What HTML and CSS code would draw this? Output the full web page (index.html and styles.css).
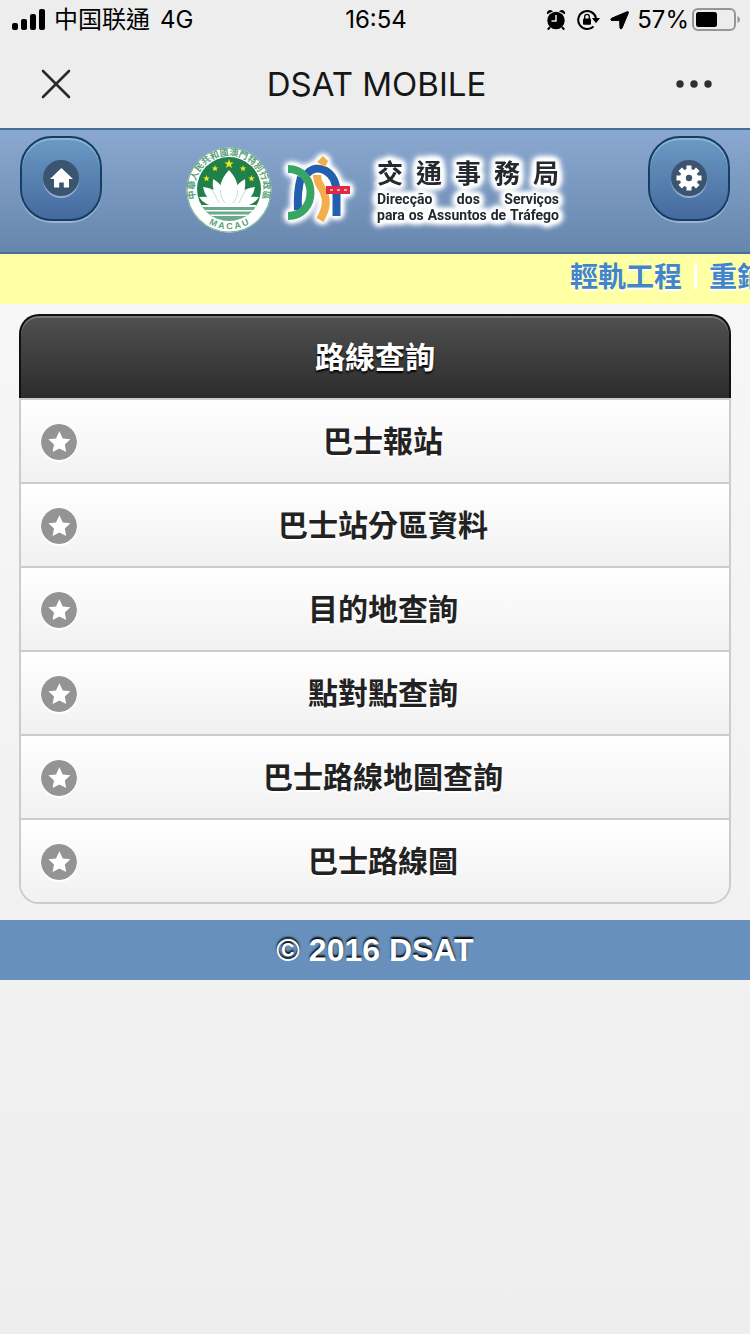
FILE: index.html
```html
<!DOCTYPE html>
<html lang="zh-Hant">
<head>
<meta charset="utf-8">
<meta name="viewport" content="width=device-width, initial-scale=1">
<title>DSAT MOBILE</title>
<link rel="stylesheet" href="styles.css">
</head>
<body>
<svg class="defs" aria-hidden="true">
  <symbol id="star" viewBox="0 0 36 36">
    <circle cx="18" cy="18" r="18" fill="#949494"/>
    <path fill="#fff" d="M18.400 7.200l3.400 7.200 7.600.8-5.600 5.400 1.400 7.400-6.800-3.600-6.800 3.600 1.400-7.400-5.600-5.400 7.600-.8z"/>
  </symbol>
  <symbol id="spark" viewBox="-10 -10 20 20">
    <path fill="#f3e421" d="M0-10L2.400-3.200 9.500-3.100 3.800 1.200 5.900 8.100 0 4 -5.900 8.100 -3.800 1.200 -9.500-3.100 -2.400-3.200z"/>
  </symbol>
</svg>

<div class="status">
  <div class="status-left">
    <svg width="34" height="22" viewBox="0 0 34 22" aria-hidden="true">
      <rect x="0" y="14" width="6" height="7" rx="2"/><rect x="9" y="10" width="6" height="11" rx="2"/><rect x="18" y="5" width="6" height="16" rx="2"/><rect x="27" y="0" width="6" height="21" rx="2"/>
    </svg>
    <span>中国联通</span><span class="network">4G</span>
  </div>
  <time class="clock">16:54</time>
  <div class="status-right">
    <svg width="20" height="22" viewBox="0 0 20 22" aria-hidden="true">
      <circle cx="10" cy="11.500" r="8.700"/>
      <path d="M1 5.200Q.2 1.200 4.800 1L7.200 2.200zM19 5.200Q19.800 1.200 15.200 1l-2.400 1.200z"/>
      <path d="M4 18l-2.200 2.700M16 18l2.200 2.700" stroke="#000" stroke-width="2"/>
      <path d="M10 6v6H5.500" fill="none" stroke="#ededed" stroke-width="1.500"/>
    </svg>
    <svg class="lock" width="23" height="22" viewBox="0 0 23 22" aria-hidden="true">
      <path d="M16.500 17.500A9 9 0 1 1 19 9" fill="none" stroke="#000" stroke-width="2"/>
      <path d="M15 9h8L19 14.300z"/>
      <rect x="6" y="9.500" width="8" height="6.200" rx="1"/>
      <path d="M7.700 10V7.700a2.300 2.300 0 0 1 4.600 0V10" fill="none" stroke="#000" stroke-width="1.300"/>
    </svg>
    <svg class="arrow" width="19" height="19" viewBox="0 0 19 19" aria-hidden="true">
      <path d="M17.200.7Q18.700.3 18.300 2L12 17.200Q11 18.900 10 17.200L9.600 9.400 1.400 9.500Q0 8.500 1.500 7.300z" stroke="#000"/>
    </svg>
    <span class="percent">57%</span>
    <svg width="48" height="24" viewBox="0 0 48 24" aria-hidden="true">
      <rect x="1" y="1" width="42" height="21" rx="5" fill="none" stroke="#969696" stroke-width="2"/>
      <rect x="4" y="4" width="21" height="15" rx="2.500"/>
      <path d="M45.500 8q2.500 1 2.500 3.500t-2.500 3.500z" fill="#969696"/>
    </svg>
  </div>
</div>

<div class="titlebar">
  <button class="plain" aria-label="Close">
    <svg width="30" height="30" viewBox="0 0 30 30"><path d="M2 2l26 26M28 2L2 28" stroke="#2b2b2b" stroke-width="2.600" stroke-linecap="round"/></svg>
  </button>
  <div class="app-title">DSAT MOBILE</div>
  <button class="plain more" aria-label="More">
    <svg width="36" height="8" viewBox="0 0 36 8" fill="#2f2f2f"><circle cx="4" cy="4" r="3.700"/><circle cx="18" cy="4" r="3.700"/><circle cx="32" cy="4" r="3.700"/></svg>
  </button>
</div>

<header class="header">
  <button class="tool" aria-label="Home">
    <svg class="disc" width="36" height="36" viewBox="0 0 36 36"><path fill="#fff" d="M18.400 8L30 19h-4v8.500h-5.200v-5h-4.600v5H11V19H7z"/></svg>
  </button>
  <div class="brand">
    <svg width="86" height="88" viewBox="0 0 86 88" aria-label="Macau">
      <clipPath id="inner"><circle cx="43" cy="43" r="32"/></clipPath>
      <circle cx="43" cy="44" r="42.500" fill="#fff"/>
      <circle cx="43" cy="44" r="42" fill="none" stroke="#7fb596" stroke-width="1.200"/>
      <g clip-path="url(#inner)">
        <path d="M0 0h86v88H0z" fill="#20804a"/>
        <path d="M0 59h86v29H0z" fill="#fff"/>
        <path d="M8 61h70v3H8zM8 65.500h70v3H8zM8 70h70v6H8z" fill="#6bab89"/>
      </g>
      <g fill="#fff">
        <path d="M43 24Q31 37 35 51L43 60 51 51Q55 37 43 24z"/>
        <path d="M27 33Q25 46 34 57L43 59Q40 40 27 33zM59 33Q61 46 52 57L43 59Q46 40 59 33z"/>
        <path d="M17 41Q19 53 31 59H43Q35 43 17 41zM69 41Q67 53 55 59H43Q51 43 69 41z"/>
        <path d="M13 51Q20 62 36 60L43 58Q28 49 13 51zM73 51Q66 62 50 60L43 58Q58 49 73 51z"/>
      </g>
      <path d="M33 57Q28 46 25 43M39 57Q33 49 35 44M47 57Q53 49 51 44M53 57Q58 46 61 43" stroke="#c4decf" fill="none"/>
      <use href="#spark" x="38" y="13" width="10" height="10"/>
      <use href="#spark" x="25.500" y="19" width="7" height="7"/><use href="#spark" x="53.500" y="19" width="7" height="7"/>
      <use href="#spark" x="17" y="29" width="7" height="7"/><use href="#spark" x="62" y="29" width="7" height="7"/>
      <path id="ring" d="M15 64.200A34.500 34.500 0 1 1 71 64.200" fill="none"/>
      <path id="base" d="M15 72A40.500 40.500 0 0 0 71 72" fill="none"/>
      <text class="seal"><textPath href="#ring" startOffset="50%" text-anchor="middle">中華人民共和國澳門特別行政區</textPath></text>
      <text class="seal-base"><textPath href="#base" startOffset="50%" text-anchor="middle">M A C A U</textPath></text>
    </svg>
    <svg class="mark" width="76" height="86" viewBox="0 0 76 86" aria-label="DSAT">
      <g fill="none" stroke-width="8">
        <path d="M20 30Q16 44 17 63" stroke="#245fad"/>
        <path d="M26 27C36 15 56 24 55.500 46V69" stroke="#245fad"/>
        <path d="M7 22C37 22 37 69 7 69" stroke="#38a563"/>
        <path d="M36 28Q36 34 40 40C48 53 45 62 39 73" stroke="#f2ae4b"/>
        <path d="M36 15l6-6 5 5-3 6z" fill="#f2ae4b" stroke="none"/>
      </g>
      <rect x="45" y="39" width="24" height="8" fill="#df2945"/>
      <path d="M49 43h3M56 43h3M63 43h3" stroke="#f3a5b3" stroke-width="2"/>
    </svg>
    <div class="brand-text">
      <div class="spread brand-cn"><span>交</span><span>通</span><span>事</span><span>務</span><span>局</span></div>
      <div class="spread brand-pt"><span>Direcção</span><span>dos</span><span>Serviços</span></div>
      <div class="spread brand-pt"><span>para</span><span>os</span><span>Assuntos</span><span>de</span><span>Tráfego</span></div>
    </div>
  </div>
  <button class="tool" aria-label="Settings">
    <svg class="disc" width="36" height="36" viewBox="0 0 36 36">
      <g stroke="#fff" stroke-width="5"><path d="M18 5.500v25M5.500 18h25M9.200 9.200l17.600 17.600M26.800 9.200L9.200 26.800"/></g>
      <circle cx="18" cy="18" r="9.200" fill="#fff"/><circle cx="18" cy="18" r="3.200" fill="#3b5570"/>
    </svg>
  </button>
</header>

<div class="ticker"><a href="#rail">輕軌工程</a><i class="bar"></i><a href="#road">重鋪</a></div>

<main class="content">
  <ul class="list">
    <li class="divider"><h1>路線查詢</h1></li>
    <li><a href="#arrival"><svg class="star"><use href="#star"/></svg><span>巴士報站</span></a></li>
    <li><a href="#zones"><svg class="star"><use href="#star"/></svg><span>巴士站分區資料</span></a></li>
    <li><a href="#destination"><svg class="star"><use href="#star"/></svg><span>目的地查詢</span></a></li>
    <li><a href="#point"><svg class="star"><use href="#star"/></svg><span>點對點查詢</span></a></li>
    <li><a href="#mapsearch"><svg class="star"><use href="#star"/></svg><span>巴士路線地圖查詢</span></a></li>
    <li><a href="#map"><svg class="star"><use href="#star"/></svg><span>巴士路線圖</span></a></li>
  </ul>
</main>

<footer class="footer">© 2016 DSAT</footer>
</body>
</html>
```
FILE: styles.css
```css
* { box-sizing: border-box; }
html { min-height: 100%; background: linear-gradient(#f9f9f9, #eee); }
body {
  margin: 0;
  font-family: "Liberation Sans", "Noto Sans CJK TC", sans-serif;
  color: #222;
  overflow-x: hidden;
}
button { margin: 0; padding: 0; border: 0; background: none; font: inherit; }
a { color: inherit; text-decoration: none; }
svg { display: block; flex: none; }
.defs { position: absolute; width: 0; height: 0; }

.status {
  display: grid;
  grid-template-columns: 1fr auto 1fr;
  align-items: center;
  height: 40px;
  padding: 0 10px 0 12px;
  background: #ededed;
  color: #000;
  font-family: Inter, "Noto Sans CJK SC", sans-serif;
  font-size: 24px;
  line-height: 40px;
}
.status-left, .status-right { display: flex; align-items: center; }
.status-left { gap: 8px; }
.network { margin-left: 2px; }
.status-right { justify-content: flex-end; }
.lock { margin-left: 11px; }
.arrow { margin: 0 8px 0 10px; }
.percent { margin-right: 3px; }

.titlebar {
  display: grid;
  grid-template-columns: 1fr auto 1fr;
  align-items: center;
  height: 88px;
  padding: 0 38px 0 41px;
  background: #ededed;
}
.plain { justify-self: start; }
.more { justify-self: end; }
.app-title {
  font-family: Inter, sans-serif;
  font-size: 33px;
  color: #161616;
}

.header {
  display: flex;
  justify-content: space-between;
  align-items: flex-start;
  height: 126px;
  padding: 6px 20px;
  border-top: 2px solid #456f9a;
  border-bottom: 2px solid #456f9a;
  background: linear-gradient(#8aa8d0, #6786ae);
}
.tool {
  display: grid;
  place-items: center;
  width: 82px;
  height: 85px;
  padding-bottom: 2px;
  border: 2px solid #153f62;
  border-radius: 32px;
  background: linear-gradient(#6b9bc5, #5c86b4 40%, #456a9e);
  box-shadow: inset 0 2px 0 #8fb4d6, 0 2px 0 #9bb5d3;
}
.disc { border-radius: 50%; background: #3b5570; box-shadow: 0 2px 0 #91aed2; }
.brand { display: flex; align-items: center; padding-top: 10px; }
.mark {
  margin: 0 20px 0 9px;
  overflow: visible;
  filter: drop-shadow(0 0 2px #fff) drop-shadow(0 0 2px #fff) drop-shadow(0 0 2px #fff) drop-shadow(0 0 2px #fff);
}
.seal { font: 700 9px "Noto Sans CJK TC", sans-serif; fill: #5a9f7c; }
.seal-base { font: 700 9px "Liberation Sans", sans-serif; fill: #5a9f7c; }
.brand-text {
  width: 182px;
  margin-right: 5px;
  color: #25292e;
  filter: drop-shadow(0 0 2px #fff) drop-shadow(0 0 2px #fff) drop-shadow(0 0 2px #fff) drop-shadow(0 0 2px #fff) drop-shadow(0 0 2px #fff);
}
.spread { display: flex; justify-content: space-between; }
.brand-cn { margin-bottom: 4px; font: 700 26px/30px "Noto Sans CJK TC", sans-serif; }
.brand-pt { font: 700 14px/16px Roboto, sans-serif; }

.ticker {
  display: flex;
  align-items: center;
  gap: 12px;
  height: 50px;
  padding-left: 76%;
  overflow: hidden;
  background: #ffffa3;
  color: #4286c5;
  font-size: 28px;
  font-weight: 700;
  line-height: 44px;
  white-space: nowrap;
  text-shadow: 0 2px 0 #fff;
}
.ticker a { flex: none; padding-bottom: 2px; }
.bar { flex: none; width: 3px; height: 26px; margin-bottom: 6px; background: #fff; }

.content { padding: 10px 19px 16px; }
.list {
  margin: 0;
  padding: 0;
  list-style: none;
  border: 2px solid #ccc;
  border-top: 0;
  border-radius: 20px;
  font-size: 30px;
}
.divider {
  margin: 0 -2px;
  height: 84px;
  border: 2px solid #111;
  border-bottom: 0;
  border-radius: 20px 20px 0 0;
  background: linear-gradient(#505050, #2c2c2c);
  box-shadow: inset 0 2px 0 #777;
  color: #fff;
  text-shadow: 0 2px 2px #000;
}
.divider h1 { margin: 0; font-size: 30px; line-height: 84px; text-align: center; }
.list a {
  display: grid;
  grid-template-columns: 36px 1fr;
  align-items: center;
  height: 84px;
  padding: 2px 20px 0;
  border-top: 2px solid #ccc;
  background: linear-gradient(#fff, #f1f1f1);
  font-weight: 700;
  line-height: 80px;
  text-align: center;
  text-shadow: 0 2px 0 #fff;
}
.list a span { padding-right: 20px; }
.list li:last-child a { border-radius: 0 0 18px 18px; }
.star { width: 36px; height: 36px; border-radius: 50%; box-shadow: 0 2px 0 #fff; }

.footer {
  height: 60px;
  background: #6790bd;
  color: #fff;
  font-size: 32px;
  font-weight: 700;
  line-height: 60px;
  text-align: center;
  text-shadow: 0 -2px 2px #000;
}
```
